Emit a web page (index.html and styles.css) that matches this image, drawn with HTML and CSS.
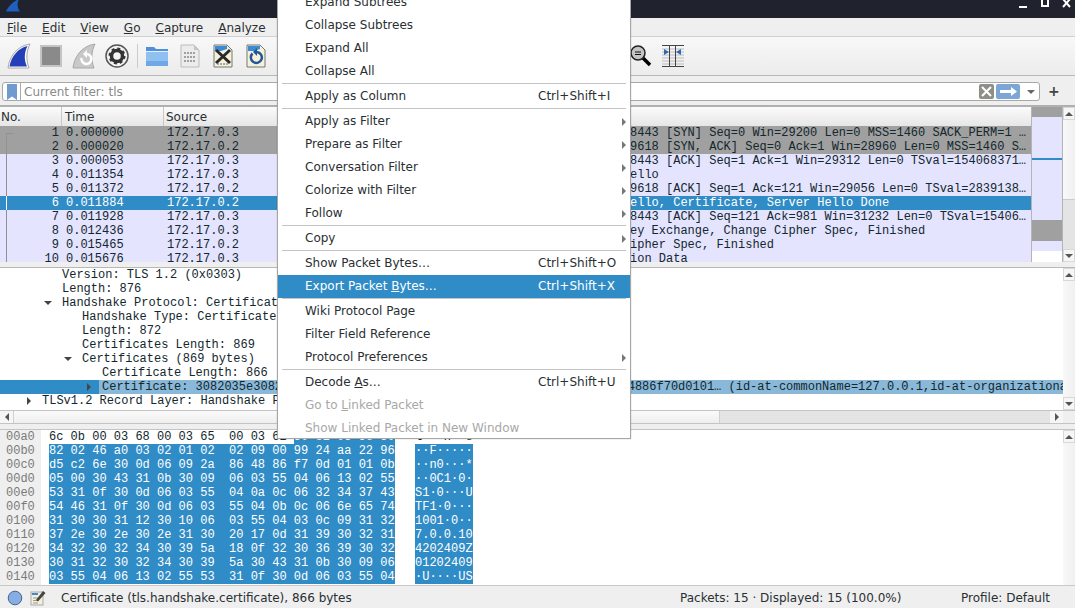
FILE: index.html
```html
<!DOCTYPE html>
<html lang="en">
<head>
    <meta charset="UTF-8">
    <title>Wireshark</title>
    <link rel="stylesheet" href="styles.css">
</head>
<body>
<div class="window">
    <div class="titlebar">
        <svg class="title-logo" width="16" height="12" viewBox="0 0 16 12"><path d="M0 11.500C2 7 6 2 13 -1C11 3 11 8 14 11.500Z" fill="#1f5fc0"/></svg>
        <div class="winbtns">
            <svg width="10" height="10" viewBox="0 0 10 10"><rect x="1" y="6" width="8" height="2" fill="#fff"/></svg>
            <svg width="10" height="10" viewBox="0 0 10 10"><rect x="2" y="-1" width="6" height="7" fill="none" stroke="#fff" stroke-width="2"/></svg>
            <svg width="10" height="10" viewBox="0 0 10 10"><path d="M1 -1L8 7M8 -1L1 7" stroke="#fff" stroke-width="2"/></svg>
        </div>
    </div>

    <div class="menubar">
        <span><u>F</u>ile</span>
        <span><u>E</u>dit</span>
        <span><u>V</u>iew</span>
        <span><u>G</u>o</span>
        <span><u>C</u>apture</span>
        <span><u>A</u>nalyze</span>
    </div>

    <div class="toolbar">
        <svg class="tool" width="24" height="26" viewBox="0 0 24 26"><path d="M1 25C2 15 9 3 23 1C19 9 19 17 22 25Z" fill="#fff" stroke="#a8a8a8"/><path d="M2.500 23.500C4 14 11 5 20.500 3C17 10 17 17 20 23.500Z" fill="#2340b8"/></svg>
        <svg class="tool tool-stop" width="22" height="22" viewBox="0 0 22 22"><rect x="1" y="1" width="20" height="20" fill="#8a8a8a" stroke="#c4c4c4" stroke-width="2"/></svg>
        <svg class="tool tool-restart" width="24" height="26" viewBox="0 0 24 26"><path d="M1 25C2 15 9 3 23 1C19 9 19 17 22 25Z" fill="#c8c8c8" stroke="#a8a8a8"/><path d="M9.500 15A5 5 0 1 0 15 11" fill="none" stroke="#fff" stroke-width="2.500"/><path d="M15 7V15L11 11Z" fill="#fff"/></svg>
        <svg class="tool tool-gear" width="24" height="24" viewBox="0 0 24 24"><circle cx="12" cy="12" r="11" fill="#f4f4f4" stroke="#555" stroke-width="1.500"/><circle cx="12" cy="12" r="5.500" fill="none" stroke="#333" stroke-width="3.500"/><circle cx="12" cy="12" r="7.500" fill="none" stroke="#333" stroke-width="2" stroke-dasharray="3 2.900"/></svg>
        <div class="tool-sep"></div>
        <svg class="tool tool-folder" width="24" height="22" viewBox="0 0 24 22"><path d="M1 2H9L11 4H23V21H1Z" fill="#4f90dc"/><rect x="1" y="6" width="22" height="15" fill="#8fc0f0"/><rect x="1" y="6" width="22" height="1" fill="#e4f0fb"/><rect x="1" y="16" width="22" height="5" fill="#6fa8e6"/></svg>
        <svg class="tool tool-file" width="20" height="24" viewBox="0 0 20 24"><path d="M1 1H14L19 6V23H1Z" fill="#ececec" stroke="#bbb"/><path d="M14 1V6H19Z" fill="#c4c4c4"/><path d="M4 9H16M4 13H16M4 17H16" stroke="#a0a0a0" stroke-width="2" stroke-dasharray="2 1"/></svg>
        <svg class="tool tool-close" width="20" height="24" viewBox="0 0 20 24"><path d="M1 1H14L19 6V23H1Z" fill="#f6f2d8" stroke="#777"/><path d="M2 2H14V5L8 7H2Z" fill="#3a8ad8"/><path d="M4 20H16" stroke="#aaa" stroke-width="2" stroke-dasharray="2 1"/><path d="M3 6L17 19M17 6L3 19" stroke="#2a2a2a" stroke-width="3"/></svg>
        <svg class="tool tool-reload" width="20" height="24" viewBox="0 0 20 24"><path d="M1 1H14L19 6V23H1Z" fill="#f6f2d8" stroke="#777"/><path d="M2 2H14V5L8 7H2Z" fill="#3a8ad8"/><path d="M6.500 9.500A5.500 5.500 0 1 0 11 8" fill="none" stroke="#24549c" stroke-width="2.500"/><path d="M11 4V12L7 8Z" fill="#24549c"/></svg>
        <div class="tool-gap"></div>
        <svg class="tool tool-zoom" width="22" height="22" viewBox="0 0 22 22"><path d="M13 13L20 20" stroke="#000" stroke-width="3.500"/><circle cx="8" cy="8" r="7" fill="#c4c4c4" stroke="#222" stroke-width="1.500"/><path d="M5 7H11M5 9.500H11" stroke="#111"/></svg>
        <svg class="tool tool-resize" width="22" height="22" viewBox="0 0 22 22"><path d="M0 4H22M0 7H22M0 10H22M0 13H22M0 16H22M0 19H22" stroke="#bbb"/><path d="M0 .5H22M0 21.500H22M7.500 0V22M13.500 0V22" stroke="#444" fill="none"/><path d="M2 4L7 7L2 10ZM19 4L14 7L19 10Z" fill="#2f6bb5"/></svg>
    </div>

    <div class="filterbar">
        <div class="filter-input">
            <div class="filter-bookmark"><svg width="10" height="16" viewBox="0 0 10 16"><path d="M0 0H10V16L5 12.500L0 16Z" fill="#6f9bd1"/></svg></div>
            <span class="filter-hint">Current filter: tls</span>
            <svg class="filter-clear" width="15" height="15" viewBox="0 0 15 15"><rect width="15" height="15" rx="2" fill="#8f8f8a"/><path d="M3 3L12 12M12 3L3 12" stroke="#fff" stroke-width="2"/></svg>
            <svg class="filter-apply" width="24" height="15" viewBox="0 0 24 15"><rect width="24" height="15" rx="2" fill="#7ba6d6"/><path d="M4 6H15V3L21 7.500L15 12V9H4Z" fill="#fff"/></svg>
            <span class="filter-drop"></span>
        </div>
        <span class="filter-plus">+</span>
    </div>

    <div class="packets">
        <div class="packet-table">
            <div class="packet-head">
                <div class="th th-no">No.</div>
                <div class="th th-time">Time</div>
                <div class="th th-rest">Source</div>
            </div>
            <div class="packet-body">
                <div class="row row-syn"><span class="c-no">1</span><span class="c-time">0.000000</span><span class="c-src">172.17.0.3</span><span class="c-info">8443 [SYN] Seq=0 Win=29200 Len=0 MSS=1460 SACK_PERM=1 …</span></div>
                <div class="row row-syn"><span class="c-no">2</span><span class="c-time">0.000020</span><span class="c-src">172.17.0.2</span><span class="c-info">9618 [SYN, ACK] Seq=0 Ack=1 Win=28960 Len=0 MSS=1460 S…</span></div>
                <div class="row"><span class="c-no">3</span><span class="c-time">0.000053</span><span class="c-src">172.17.0.3</span><span class="c-info">8443 [ACK] Seq=1 Ack=1 Win=29312 Len=0 TSval=154068371…</span></div>
                <div class="row"><span class="c-no">4</span><span class="c-time">0.011354</span><span class="c-src">172.17.0.3</span><span class="c-info">ello</span></div>
                <div class="row"><span class="c-no">5</span><span class="c-time">0.011372</span><span class="c-src">172.17.0.2</span><span class="c-info">9618 [ACK] Seq=1 Ack=121 Win=29056 Len=0 TSval=2839138…</span></div>
                <div class="row row-sel"><span class="c-no">6</span><span class="c-time">0.011884</span><span class="c-src">172.17.0.2</span><span class="c-info">ello, Certificate, Server Hello Done</span></div>
                <div class="row"><span class="c-no">7</span><span class="c-time">0.011928</span><span class="c-src">172.17.0.3</span><span class="c-info">8443 [ACK] Seq=121 Ack=981 Win=31232 Len=0 TSval=15406…</span></div>
                <div class="row"><span class="c-no">8</span><span class="c-time">0.012436</span><span class="c-src">172.17.0.3</span><span class="c-info">ey Exchange, Change Cipher Spec, Finished</span></div>
                <div class="row"><span class="c-no">9</span><span class="c-time">0.015465</span><span class="c-src">172.17.0.2</span><span class="c-info">ipher Spec, Finished</span></div>
                <div class="row"><span class="c-no">10</span><span class="c-time">0.015676</span><span class="c-src">172.17.0.3</span><span class="c-info">ion Data</span></div>
                <div class="related"><div class="related-tick"></div><div class="related-on"></div></div>
            </div>
        </div>
        <div class="minimap">
            <div class="mm-gray mm-a"></div>
            <div class="mm-lav mm-b"></div>
            <div class="mm-sel"></div>
            <div class="mm-lav mm-c"></div>
            <div class="mm-gray mm-d"></div>
            <div class="mm-lav mm-e"></div>
        </div>
        <div class="vscroll">
            <div class="sb-btn"><i class="arr arr-up"></i></div>
            <div class="sb-thumb sb-thumb-list"></div>
            <div class="sb-trough"></div>
            <div class="sb-btn"><i class="arr arr-down"></i></div>
        </div>
    </div>

    <div class="details">
        <div class="details-main">
            <div class="tree">
                <div class="node lv3">Version: TLS 1.2 (0x0303)</div>
                <div class="node lv3">Length: 876</div>
                <div class="node lv3"><i class="tw tw-open"></i>Handshake Protocol: Certificate</div>
                <div class="node lv4">Handshake Type: Certificate (11)</div>
                <div class="node lv4">Length: 872</div>
                <div class="node lv4">Certificates Length: 869</div>
                <div class="node lv4"><i class="tw tw-open"></i>Certificates (869 bytes)</div>
                <div class="node lv5">Certificate Length: 866</div>
                <div class="node lv5 node-sel"><i class="tw tw-shut"></i><span class="node-text">Certificate: 3082035e30820246a0030201020209009924aa2296d5c26e300d06092a864886f70d0101… (id-at-commonName=127.0.0.1,id-at-organizationalName=net)</span></div>
                <div class="node lv2"><i class="tw tw-shut"></i>TLSv1.2 Record Layer: Handshake Protocol: Server Hello Done</div>
            </div>
            <div class="vscroll">
                <div class="sb-btn"><i class="arr arr-up"></i></div>
                <div class="sb-thumb"></div>
                <div class="sb-btn"><i class="arr arr-down"></i></div>
            </div>
        </div>
        <div class="hscroll">
            <div class="sb-btn-h"><i class="arr arr-left"></i></div>
            <div class="sb-thumb-h"></div>
            <div class="sb-trough-h"></div>
            <div class="sb-btn-h"><i class="arr arr-right"></i></div>
            <div class="sb-corner"></div>
        </div>
    </div>

    <div class="bytes">
        <div class="offsets">
            <div>00a0</div><div>00b0</div><div>00c0</div><div>00d0</div><div>00e0</div><div>00f0</div><div>0100</div><div>0110</div><div>0120</div><div>0130</div><div>0140</div>
        </div>
        <div class="hexcol">
            <div>6c 0b 00 03 68 00 03 65  00 03 62 <b>30 82 03 5e 30</b></div>
            <div><b>82 02 46 a0 03 02 01 02  02 09 00 99 24 aa 22 96</b></div>
            <div><b>d5 c2 6e 30 0d 06 09 2a  86 48 86 f7 0d 01 01 0b</b></div>
            <div><b>05 00 30 43 31 0b 30 09  06 03 55 04 06 13 02 55</b></div>
            <div><b>53 31 0f 30 0d 06 03 55  04 0a 0c 06 32 34 37 43</b></div>
            <div><b>54 46 31 0f 30 0d 06 03  55 04 0b 0c 06 6e 65 74</b></div>
            <div><b>31 30 30 31 12 30 10 06  03 55 04 03 0c 09 31 32</b></div>
            <div><b>37 2e 30 2e 30 2e 31 30  20 17 0d 31 39 30 32 31</b></div>
            <div><b>34 32 30 32 34 30 39 5a  18 0f 32 30 36 39 30 32</b></div>
            <div><b>30 31 32 30 32 34 30 39  5a 30 43 31 0b 30 09 06</b></div>
            <div><b>03 55 04 06 13 02 55 53  31 0f 30 0d 06 03 55 04</b></div>
        </div>
        <div class="asciicol">
            <div>l···h··e</div>
            <div><b>··F·····</b></div>
            <div><b>··n0···*</b></div>
            <div><b>··0C1·0·</b></div>
            <div><b>S1·0···U</b></div>
            <div><b>TF1·0···</b></div>
            <div><b>1001·0··</b></div>
            <div><b>7.0.0.10</b></div>
            <div><b>4202409Z</b></div>
            <div><b>01202409</b></div>
            <div><b>·U····US</b></div>
        </div>
        <div class="vscroll">
            <div class="sb-btn"><i class="arr arr-up"></i></div>
            <div class="sb-thumb"></div>
        </div>
    </div>

    <div class="statusbar">
        <div class="st-left">
            <svg width="16" height="16" viewBox="0 0 16 16"><circle cx="8" cy="8" r="6.800" fill="#86aee2" stroke="#46648e"/></svg>
            <svg class="st-edit" width="16" height="16" viewBox="0 0 16 16"><rect x="1" y="2" width="12" height="13" fill="#f4f0d8" stroke="#aaa"/><path d="M2 3H8V5H2Z" fill="#3a8ad8"/><path d="M3 8H8M3 10.500H8M3 13H8" stroke="#999"/><path d="M6 10L13 1L15.500 3L8 11.500Z" fill="#444"/></svg>
            <span class="st-text">Certificate (tls.handshake.certificate), 866 bytes</span>
        </div>
        <div class="st-mid">Packets: 15 · Displayed: 15 (100.0%)</div>
        <div class="st-right">Profile: Default</div>
    </div>
</div>

<div class="menu">
    <div class="mi">Expand Subtrees</div>
    <div class="mi">Collapse Subtrees</div>
    <div class="mi">Expand All</div>
    <div class="mi">Collapse All</div>
    <div class="sep"></div>
    <div class="mi">Apply as Column<kbd>Ctrl+Shift+I</kbd></div>
    <div class="sep"></div>
    <div class="mi mi-sub">Apply as Filter</div>
    <div class="mi mi-sub">Prepare as Filter</div>
    <div class="mi mi-sub">Conversation Filter</div>
    <div class="mi mi-sub">Colorize with Filter</div>
    <div class="mi mi-sub">Follow</div>
    <div class="sep"></div>
    <div class="mi mi-sub">Copy</div>
    <div class="sep"></div>
    <div class="mi">Show Packet Bytes…<kbd>Ctrl+Shift+O</kbd></div>
    <div class="mi mi-on">Export Packet <u>B</u>ytes…<kbd>Ctrl+Shift+X</kbd></div>
    <div class="sep"></div>
    <div class="mi">Wiki Protocol Page</div>
    <div class="mi">Filter Field Reference</div>
    <div class="mi mi-sub">Protocol Preferences</div>
    <div class="sep"></div>
    <div class="mi">Decode <u>A</u>s…<kbd>Ctrl+Shift+U</kbd></div>
    <div class="mi mi-off">Go to <u>L</u>inked Packet</div>
    <div class="mi mi-off">Show Linked Packet in New Window</div>
</div>
</body>
</html>
```

FILE: styles.css
```css
*{
    margin: 0;
    padding: 0;
    box-sizing: border-box;
}
html,body{
    width: 1075px;
    height: 608px;
    overflow: hidden;
}
body{
    position: relative;
    background: #efefef;
    font: 12px/14px "DejaVu Sans", sans-serif;
    color: #2a2f33;
}
.window{
    display: flex;
    flex-direction: column;
    height: 608px;
}

/* title + menu */
.titlebar{
    height: 18px;
    background: #20232e;
    display: flex;
    justify-content: space-between;
    overflow: hidden;
    padding: 0 3px 0 6px;
}
.title-logo{
    display: block;
}
.winbtns{
    display: flex;
    gap: 12px;
    height: 10px;
}
.menubar{
    height: 19px;
    background: #efefef;
    border-bottom: 1px solid #d0d0d0;
    display: flex;
    gap: 15px;
    padding: 3px 0 0 7px;
}

/* toolbar */
.toolbar{
    height: 39px;
    background: linear-gradient(#f8f8f8, #ececec);
    border-bottom: 1px solid #b8b8b8;
    display: flex;
    align-items: center;
    padding-left: 7px;
}
.tool{
    flex: none;
}
.tool-stop{ margin-left: 9px; }
.tool-restart{ margin-left: 10px; }
.tool-gear{ margin-left: 9px; }
.tool-sep{
    width: 1px;
    height: 24px;
    background: #ccc;
    margin-left: 8px;
}
.tool-folder{ margin-left: 7px; }
.tool-file{ margin-left: 11px; }
.tool-close{ margin-left: 13px; }
.tool-reload{ margin-left: 13px; }
.tool-gap{ width: 364px; }
.tool-resize{ margin-left: 10px; }

/* filter */
.filterbar{
    height: 31px;
    background: #efefef;
    display: flex;
    align-items: flex-start;
    padding: 6px 0 0 2px;
    border-bottom: 2px solid #b0b0b0;
}
.filter-input{
    width: 1038px;
    height: 19px;
    background: #fff;
    border: 1px solid #a8a8a8;
    border-radius: 3px;
    display: flex;
    align-items: center;
}
.filter-bookmark{
    width: 18px;
    height: 17px;
    border-right: 1px solid #a8a8a8;
    padding: 1px 0 0 4px;
}
.filter-hint{
    flex: 1;
    margin-left: 3px;
    color: #8a8a8a;
}
.filter-clear{ margin-right: 2px; }
.filter-drop{
    width: 0;
    height: 0;
    border: 4px solid transparent;
    border-top: 4px solid #666;
    border-bottom: 0;
    margin: 0 4px 0 7px;
}
.filter-plus{
    margin: 2px 0 0 8px;
    font-size: 14px;
    font-weight: bold;
    color: #444;
}

/* packet list */
.packets{
    height: 161px;
    flex: none;
    display: flex;
    background: #efefef;
    border-bottom: 1px solid #b8b8b8;
}
.packet-table{
    width: 1031px;
    height: 155px;
    overflow: hidden;
}
.packet-head{
    height: 19px;
    display: flex;
    background: linear-gradient(#fbfbfb, #e6e6e6);
}
.th{
    padding: 3px 0 0 1px;
    border-right: 1px solid #c8c8c8;
}
.th-no{ width: 62px; }
.th-time{ width: 102px; padding-left: 3px; }
.th-rest{ flex: 1; padding-left: 2px; border: 0; }
.packet-body{
    position: relative;
    height: 136px;
    overflow: hidden;
}
.row{
    height: 14px;
    display: flex;
    background: #e4e4ff;
    color: #12272e;
    font: 12px/14px "Liberation Mono", monospace;
    white-space: pre;
}
.row-syn{ background: #a0a0a0; }
.row-sel{ background: #308cc6; color: #fff; }
.c-no{ width: 59px; text-align: right; }
.c-time{ width: 105px; padding-left: 7px; }
.c-src{ width: 466px; padding-left: 3px; }
.c-info{ flex: 1; overflow: hidden; }
.related{
    position: absolute;
    left: 6px;
    top: 7px;
    width: 7px;
    height: 129px;
    border-left: 1px solid #8a9498;
}
.related-tick{
    height: 1px;
    background: #8a9498;
}
.related-on{
    position: absolute;
    left: -1px;
    top: 63px;
    width: 1px;
    height: 14px;
    background: #fff;
}
.minimap{
    width: 32px;
    border: 1px solid #b4b4b4;
    border-width: 0 1px;
    background: #fff;
    height: 155px;
}
.mm-gray{ background: #a0a0a0; }
.mm-lav{ background: #e4e4ff; }
.mm-a{ height: 10px; }
.mm-b{ height: 41px; }
.mm-sel{ height: 2px; background: #308cc6; }
.mm-c{ height: 60px; }
.mm-d{ height: 21px; }
.mm-e{ height: 10px; }

/* scrollbars */
.vscroll{
    width: 12px;
    flex: none;
    display: flex;
    flex-direction: column;
    background: #e4e4e4;
}
.packets .vscroll{ height: 155px; }
.sb-btn{
    height: 13px;
    background: #f6f6f6;
    border: 1px solid #d8d8d8;
    display: flex;
    align-items: center;
    justify-content: center;
    flex: none;
}
.sb-thumb{
    flex: 1;
    background: linear-gradient(90deg, #f8f8f8, #f0f0f0);
}
.sb-thumb-list{
    flex: none;
    height: 80px;
    border-bottom: 1px solid #ccc;
}
.sb-trough{
    flex: 1;
}
.arr{
    display: block;
    width: 0;
    height: 0;
    border: 4px solid transparent;
}
.arr-up{ border-bottom: 4px solid #555; border-top: 0; }
.arr-down{ border-top: 4px solid #555; border-bottom: 0; }
.arr-left{ border-right: 4px solid #555; border-left: 0; }
.arr-right{ border-left: 4px solid #555; border-right: 0; }

/* details tree */
.details{
    height: 156px;
    flex: none;
    display: flex;
    flex-direction: column;
    background: #fff;
}
.details-main{
    height: 142px;
    display: flex;
}
.tree{
    width: 1063px;
    overflow: hidden;
    font: 12px/14px "Liberation Mono", monospace;
    color: #12272e;
}
.node{
    position: relative;
    height: 14px;
    white-space: pre;
}
.lv2{ padding-left: 42px; }
.lv3{ padding-left: 62px; }
.lv4{ padding-left: 82px; }
.lv5{ padding-left: 102px; }
.tw{
    position: absolute;
    width: 0;
    height: 0;
    border: 4px solid transparent;
}
.tw-open{
    top: 5px;
    border-top: 4px solid #444;
    border-bottom: 0;
}
.lv3 .tw-open{ left: 44px; }
.lv4 .tw-open{ left: 64px; }
.tw-shut{
    top: 3px;
    border-left: 4px solid #444;
    border-right: 0;
}
.lv5 .tw-shut{ left: 87px; }
.lv2 .tw-shut{ left: 27px; }
.node-sel{
    background: #308cc6;
    padding-left: 99px;
    overflow: hidden;
}
.node-text{
    display: block;
    height: 14px;
    padding-left: 3px;
    background: #8ab8d8;
}
.hscroll{
    height: 14px;
    flex: none;
    display: flex;
    background: #e4e4e4;
    border-top: 1px solid #c4c4c4;
    border-bottom: 1px solid #c4c4c4;
}
.sb-btn-h{
    width: 13px;
    background: #f6f6f6;
    display: flex;
    align-items: center;
    justify-content: center;
    flex: none;
}
.sb-thumb-h{
    width: 707px;
    background: linear-gradient(#fafafa, #efefef);
    border: 1px solid #d0d0d0;
    border-width: 0 1px;
}
.sb-trough-h{ flex: 1; }
.sb-corner{
    width: 12px;
    background: #efefef;
}

/* bytes pane */
.bytes{
    height: 156px;
    flex: none;
    margin-top: 5px;
    display: flex;
    background: #fff;
    border-top: 1px solid #c4c4c4;
    font: 12px/14px "Liberation Mono", monospace;
    color: #12272e;
    overflow: hidden;
}
.offsets{
    width: 41px;
    background: #efefef;
    padding-left: 6px;
    color: #7a7a7a;
}
.hexcol{
    width: 374px;
    padding-left: 8px;
}
.asciicol{
    flex: 1;
}
.hexcol div,
.asciicol div{
    height: 14px;
    white-space: pre;
}
.bytes b{
    display: inline-block;
    height: 14px;
    font-weight: normal;
    background: #308cc6;
    color: #fff;
}

/* status */
.statusbar{
    flex: 1;
    background: #efefef;
    border-top: 1px solid #c8c8c8;
    display: flex;
    align-items: center;
    padding-top: 1px;
}
.st-left{
    width: 680px;
    display: flex;
    align-items: center;
    padding-left: 7px;
}
.st-edit{ margin-left: 7px; }
.st-text{ margin-left: 15px; }
.st-mid{ width: 281px; }

/* context menu */
.menu{
    position: absolute;
    left: 277px;
    top: -10px;
    width: 354px;
    height: 449px;
    background: #fff;
    border: 1px solid #a6a6a6;
    padding: 0 4px;
    color: #2a2f33;
    box-shadow: 0 0 1px rgba(0, 0, 0, 0.3);
}
.mi{
    position: relative;
    height: 23px;
    line-height: 23px;
    margin: 0 -4px;
    padding-left: 27px;
    white-space: pre;
}
.mi kbd{
    position: absolute;
    left: 260px;
    top: 0;
    font: inherit;
}
.mi-sub::after{
    content: "";
    position: absolute;
    right: 4px;
    top: 8px;
    border: 4px solid transparent;
    border-left: 4px solid #777;
    border-right: 0;
}
.mi-on{
    background: #308cc6;
    color: #fff;
}
.mi-off{ color: #a8a8a8; }
.sep{
    height: 2px;
    border-top: 1px solid #c4c4c4;
}
```
